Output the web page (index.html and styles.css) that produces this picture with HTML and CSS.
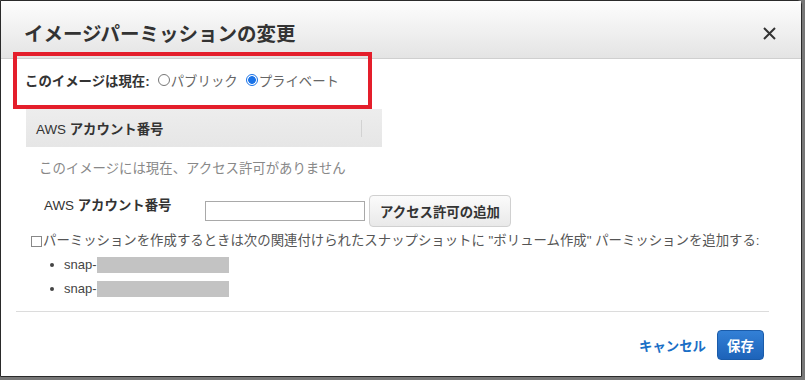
FILE: index.html
```html
<!DOCTYPE html>
<html>
<head>
    <title>イメージパーミッションの変更</title>
    <link rel="stylesheet" href="styles.css">
</head>
<body>
    <div class="modal">
        <div class="modal-header">
            <h2>イメージパーミッションの変更</h2>
            <svg class="close" width="13" height="13" viewBox="0 0 13 13">
                <path d="M1 1 L12 12 M12 1 L1 12" stroke="#333" stroke-width="2" fill="none"/>
            </svg>
        </div>

        <div class="modal-body">
            <div class="status">
                <b>このイメージは現在:</b>
                <span class="radio"></span><span>パブリック</span>
                <span class="radio checked"></span><span>プライベート</span>
            </div>

            <div class="table-head">
                <span>AWS <b>アカウント番号</b></span>
                <span class="divider"></span>
            </div>
            <div class="empty">このイメージには現在、アクセス許可がありません</div>

            <div class="account-row">
                <label>AWS <b>アカウント番号</b></label>
                <input type="text" class="account-input">
                <button class="btn">アクセス許可の追加</button>
            </div>

            <div class="check-line">
                <span class="checkbox"></span>パーミッションを作成するときは次の関連付けられたスナップショットに "ボリューム作成" パーミッションを追加する:
            </div>

            <ul class="snaps">
                <li>snap-<span class="masked"></span></li>
                <li>snap-<span class="masked"></span></li>
            </ul>

            <hr>
        </div>

        <div class="modal-footer">
            <a class="cancel">キャンセル</a>
            <button class="btn-primary">保存</button>
        </div>

        <div class="highlight"></div>
    </div>
</body>
</html>
```

FILE: styles.css
```css
body {
    margin: 0;
    background: #777;
    font-family: "Liberation Sans", "Noto Sans CJK JP", sans-serif;
    font-size: 13.4px;
    color: #333;
}

.modal {
    position: relative;
    width: 802px;
    height: 377px;
    background: white;
    border: 1px solid #2a2a2a;
    border-radius: 0 4px 0 0;
    box-sizing: border-box;
}

.modal-header {
    height: 58px;
    padding: 8px 25px 0 23px;
    box-sizing: border-box;
    display: flex;
    align-items: center;
    justify-content: space-between;
    background: linear-gradient(#fdfdfd, #e4e4e4);
    border-bottom: 1px solid #cfcfcf;
}

.modal-header h2 {
    margin: 0;
    font-size: 19.5px;
    font-weight: bold;
    color: #333;
    line-height: 24px;
}

.modal-body {
    padding: 0 32px 0 15px;
}

.status {
    margin: 8px 0 0 9px;
    height: 26px;
    display: flex;
    align-items: center;
    color: #666;
}

.status b {
    color: #333;
}

.radio {
    width: 10px;
    height: 10px;
    border: 1px solid #777;
    border-radius: 50%;
    margin: 0 1px 0 8px;
    box-sizing: content-box;
}

.radio.checked {
    border-color: #1a73e8;
    background: radial-gradient(circle, #1a73e8 3.5px, white 4.2px);
}

.table-head {
    margin: 16px 0 0 10px;
    width: 356px;
    height: 38px;
    background: linear-gradient(#ededed, #e6e6e6);
    display: flex;
    align-items: center;
    justify-content: space-between;
    padding: 0 20px 0 10px;
    box-sizing: border-box;
}

.table-head .divider {
    width: 1px;
    height: 17px;
    background: #d2d2d2;
}

.empty {
    height: 44px;
    line-height: 44px;
    padding-left: 23px;
    color: #888;
}

.account-row {
    margin: 4px 0 0 28px;
    display: flex;
    align-items: center;
    height: 32px;
}

.account-row label {
    width: 161px;
    align-self: flex-start;
    line-height: 22px;
}

.account-input {
    width: 160px;
    height: 20px;
    box-sizing: border-box;
    border: 1px solid #a9a9a9;
    margin: 0;
}

.btn {
    margin-left: 4px;
    width: 142px;
    height: 32px;
    border: 1px solid #d0d0d0;
    border-radius: 4px;
    background: linear-gradient(#fbfbfb, #e9e9e9);
    font: bold 13.4px "Liberation Sans", "Noto Sans CJK JP", sans-serif;
    color: #333;
    padding: 0;
}

.check-line {
    margin: 4px 0 0 15px;
    height: 20px;
    line-height: 20px;
    color: #555;
    display: flex;
    align-items: center;
    white-space: nowrap;
}

.checkbox {
    width: 9px;
    height: 9px;
    border: 1px solid #888;
    margin-right: 1px;
}

.snaps {
    margin: 2px 0 0 0;
    padding-left: 45px;
    color: #444;
    font-size: 13px;
}

.snaps li {
    height: 24px;
    line-height: 24px;
    display: flex;
    align-items: center;
}

.snaps li::before {
    content: "";
    width: 4px;
    height: 4px;
    border-radius: 50%;
    background: #444;
    margin: 0 10px 0 -11px;
}

.masked {
    width: 132px;
    height: 16px;
    background: #c3c3c3;
}

hr {
    margin: 10px 0 0 0;
    border: none;
    border-top: 1px solid #dcdcdc;
}

.modal-footer {
    margin-top: 15px;
    padding-right: 37px;
    display: flex;
    justify-content: flex-end;
    align-items: center;
    gap: 11px;
}

.cancel {
    color: #1b6fc6;
    font-weight: bold;
    line-height: 30px;
    margin-top: 5px;
}

.btn-primary {
    width: 47px;
    height: 30px;
    border: 1px solid #1a5ba9;
    border-radius: 4px;
    background: linear-gradient(#3380d6, #1d63b9);
    color: white;
    font: bold 13.4px "Liberation Sans", "Noto Sans CJK JP", sans-serif;
    padding: 0;
}

.highlight {
    position: absolute;
    left: 12px;
    top: 51px;
    width: 359px;
    height: 57px;
    border: 4px solid #e41e2b;
    box-sizing: border-box;
}
```
